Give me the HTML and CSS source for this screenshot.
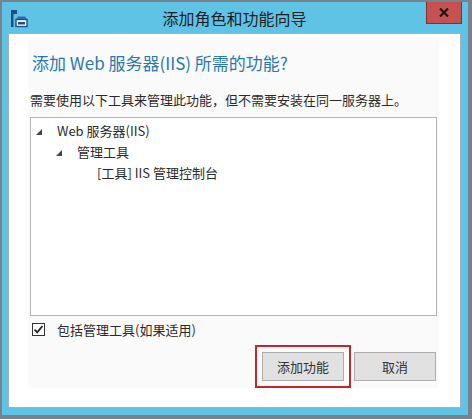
FILE: index.html
```html
<!DOCTYPE html>
<html lang="zh-CN">
<head>
  <meta charset="UTF-8">
  <title>添加角色和功能向导</title>
  <link rel="stylesheet" href="styles.css">
</head>
<body>

<div class="window">
  <div class="titlebar">
    <svg class="app-icon" width="18" height="18" viewBox="0 0 18 18">
      <rect x="1" y="0" width="6" height="4" fill="#1f4f86"/>
      <rect x="1" y="0" width="2.5" height="17" fill="#1f4f86"/>
      <path d="M6 9.5 L8 6.5 H15 L17 9.5 Z" fill="#2f6db4"/>
      <rect x="6" y="9.5" width="11" height="7" fill="#ffffff" stroke="#1f4f86" stroke-width="1.4"/>
      <rect x="8" y="12" width="7" height="2.5" fill="#1f4f86"/>
    </svg>
    <div class="title">添加角色和功能向导</div>
    <div class="close-btn">
      <svg width="10" height="9" viewBox="0 0 10 9">
        <path d="M1 0.5 L9 8.5 M9 0.5 L1 8.5" stroke="#1a1a1a" stroke-width="2.2"/>
      </svg>
    </div>
  </div>

  <div class="client">
    <div class="panel">
      <h1 class="heading">添加 Web 服务器(IIS) 所需的功能?</h1>
      <p class="desc">需要使用以下工具来管理此功能，但不需要安装在同一服务器上。</p>

      <div class="tree">
        <div class="tree-row">
          <span class="arrow"><svg width="6" height="6" viewBox="0 0 6 6"><path d="M6 0 V6 H0 Z" fill="#444"/></svg></span>
          <span>Web 服务器(IIS)</span>
        </div>
        <div class="tree-row level-2">
          <span class="arrow"><svg width="6" height="6" viewBox="0 0 6 6"><path d="M6 0 V6 H0 Z" fill="#444"/></svg></span>
          <span>管理工具</span>
        </div>
        <div class="tree-row level-3">
          <span class="arrow"></span>
          <span>[工具] IIS 管理控制台</span>
        </div>
      </div>

      <label class="check-row">
        <span class="checkbox">
          <svg width="11" height="11" viewBox="0 0 11 11"><path d="M1.5 5.5 L4.2 8.3 L9.5 2" fill="none" stroke="#222" stroke-width="1.8"/></svg>
        </span>
        包括管理工具(如果适用)
      </label>

      <div class="actions">
        <div class="focus-ring">
          <button class="btn">添加功能</button>
        </div>
        <button class="btn">取消</button>
      </div>
    </div>
  </div>
</div>

</body>
</html>
```

FILE: styles.css
```css
body {
  margin: 0;
  font-family: "Noto Sans CJK SC", "Noto Sans", sans-serif;
  background: #ffffff;
}
.window {
  width: 472px;
  height: 419px;
  box-sizing: border-box;
  border-style: solid;
  border-color: #76838c;
  border-width: 2px 4px 4px 2px;
  background: #5fc3e6;
  padding: 0 7px 7px 6px;
  display: flex;
  flex-direction: column;
}
.titlebar {
  height: 31px;
  display: flex;
  align-items: flex-start;
  position: relative;
}
.app-icon {
  margin: 8px 0 0 2px;
}
.title {
  position: absolute;
  left: 0;
  right: 0;
  top: 5px;
  text-align: center;
  font-size: 16px;
  line-height: 22px;
  color: #1e1e1e;
}
.close-btn {
  margin-left: auto;
  margin-right: -1px;
  width: 36px;
  height: 22px;
  box-sizing: border-box;
  background: #c75050;
  border: 1px solid #7c3333;
  border-top: none;
  display: flex;
  align-items: center;
  justify-content: center;
  position: relative;
  z-index: 1;
}
.client {
  flex: 1;
  background: #ffffff;
  border: 1px solid #9fb3bd;
  padding: 6px 21px 19px 19px;
  display: flex;
}
.panel {
  flex: 1;
  background: #fafafa;
  padding: 12px 2px 0 2px;
  display: flex;
  flex-direction: column;
}
.heading {
  margin: 0;
  padding-left: 2px;
  font-size: 17px;
  line-height: 22px;
  font-weight: normal;
  color: #2a78ae;
}
.desc {
  margin: 17px 0 8px 0;
  font-size: 13px;
  line-height: 18px;
  color: #2a2a2a;
}
.tree {
  height: 199px;
  box-sizing: border-box;
  background: #ffffff;
  border: 1px solid #b5b5b5;
  padding: 2px 0 0 5px;
}
.tree-row {
  height: 21px;
  display: flex;
  align-items: center;
  font-size: 13px;
  color: #2a2a2a;
}
.tree-row .arrow {
  width: 21px;
  display: flex;
  align-items: center;
  padding-top: 2px;
}
.level-2 {
  padding-left: 20px;
}
.level-3 {
  padding-left: 40px;
}
.check-row {
  margin-top: 4px;
  height: 18px;
  display: flex;
  align-items: center;
  font-size: 13px;
  color: #2a2a2a;
}
.checkbox {
  width: 13px;
  height: 13px;
  box-sizing: border-box;
  border: 1px solid #333;
  background: #fff;
  margin: 0 12px 0 2px;
  display: flex;
  align-items: center;
  justify-content: center;
}
.actions {
  margin-top: 7px;
  display: flex;
  justify-content: flex-end;
  align-items: center;
  gap: 3px;
  padding-right: 1px;
}
.focus-ring {
  border: 2px solid #c4262c;
  padding: 5px;
  display: flex;
}
.btn {
  width: 82px;
  height: 29px;
  background: #e1e1e1;
  border: 1px solid #adadad;
  font-family: "Noto Sans CJK SC", sans-serif;
  font-size: 13px;
  color: #333;
  padding: 0;
}
```
